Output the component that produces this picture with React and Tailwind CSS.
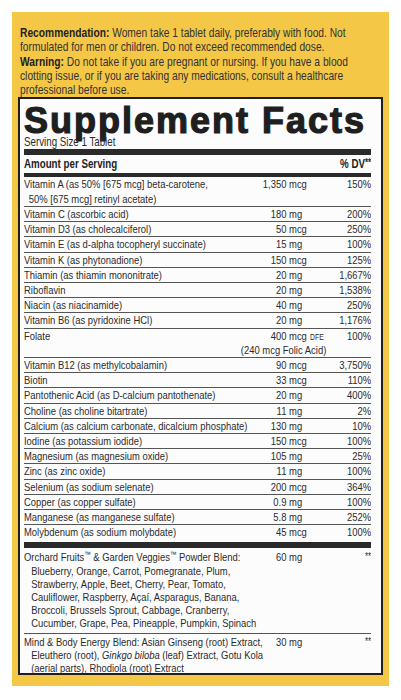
const rows = [
  { name: ["Vitamin A (as 50% [675 mcg] beta-carotene,", "50% [675 mcg] retinyl acetate)"], n: "1,350", u: "mcg", dv: "150%" },
  { name: ["Vitamin C (ascorbic acid)"], n: "180", u: "mg", dv: "200%" },
  { name: ["Vitamin D3 (as cholecalciferol)"], n: "50", u: "mcg", dv: "250%" },
  { name: ["Vitamin E (as d-alpha tocopheryl succinate)"], n: "15", u: "mg", dv: "100%" },
  { name: ["Vitamin K (as phytonadione)"], n: "150", u: "mcg", dv: "125%" },
  { name: ["Thiamin (as thiamin mononitrate)"], n: "20", u: "mg", dv: "1,667%" },
  { name: ["Riboflavin"], n: "20", u: "mg", dv: "1,538%" },
  { name: ["Niacin (as niacinamide)"], n: "40", u: "mg", dv: "250%" },
  { name: ["Vitamin B6 (as pyridoxine HCl)"], n: "20", u: "mg", dv: "1,176%" },
  { name: ["Folate"], n: "400", u: "mcg", dfe: true, dv: "100%" },
  { name: ["Vitamin B12 (as methylcobalamin)"], n: "90", u: "mcg", dv: "3,750%" },
  { name: ["Biotin"], n: "33", u: "mcg", dv: "110%" },
  { name: ["Pantothenic Acid (as D-calcium pantothenate)"], n: "20", u: "mg", dv: "400%" },
  { name: ["Choline (as choline bitartrate)"], n: "11", u: "mg", dv: "2%" },
  { name: ["Calcium (as calcium carbonate, dicalcium phosphate)"], n: "130", u: "mg", dv: "10%" },
  { name: ["Iodine (as potassium iodide)"], n: "150", u: "mcg", dv: "100%" },
  { name: ["Magnesium (as magnesium oxide)"], n: "105", u: "mg", dv: "25%" },
  { name: ["Zinc (as zinc oxide)"], n: "11", u: "mg", dv: "100%" },
  { name: ["Selenium (as sodium selenate)"], n: "200", u: "mcg", dv: "364%" },
  { name: ["Copper (as copper sulfate)"], n: "0.9", u: "mg", dv: "100%" },
  { name: ["Manganese (as manganese sulfate)"], n: "5.8", u: "mg", dv: "252%" },
  { name: ["Molybdenum (as sodium molybdate)"], n: "45", u: "mcg", dv: "100%" },
];

// the label is set in a condensed face; there is none installed, so the text
// blocks are laid out wide and squeezed to 80% horizontally.
function Amount({ n, u, dfe }) {
  return (
    <div className="w-[85px] shrink-0">
      <div className="whitespace-nowrap">
        <span className="inline-block w-[31px] text-right">{n}</span>{" "}
        {u}
        {dfe && <span className="text-[8.5px] leading-none ml-[4px]">DFE</span>}
      </div>
      {dfe && <div className="-ml-[26px] whitespace-nowrap">(240 mcg Folic Acid)</div>}
    </div>
  );
}

function Row({ r, last }) {
  return (
    <div className={"flex leading-[14.2px] " + (last ? "" : "border-b border-[#555]")}>
      <div className="w-[297px] shrink-0 whitespace-nowrap">
        {r.name.map((l, i) => (
          <div key={i} className={i > 0 ? "pl-[6px]" : ""}>{l}</div>
        ))}
      </div>
      <Amount n={r.n} u={r.u} dfe={r.dfe} />
      <div className="flex-1 text-right">{r.dv}</div>
    </div>
  );
}

const TM = () => <span className="text-[8px] leading-none align-[4px]">™</span>;

export default function App() {
  return (
    <div className="w-[401px] h-[700px] bg-white pt-3 pl-3 font-['Liberation_Sans',Arial,sans-serif]">
      <div className="w-[377px] h-[674px] bg-[#f4c746] pt-[14px] px-[6px] text-[#2a2a2a]">
        <div className="w-[360px] pl-[2px] overflow-hidden">
          <p className="w-[440px] origin-top-left scale-x-[0.8] text-[12.8px] leading-[14.3px] text-[#333] whitespace-nowrap">
            <b className="font-bold text-[#222]">Recommendation:</b> Women take 1 tablet daily, preferably with food. Not<br />
            formulated for men or children. Do not exceed recommended dose.<br />
            <b className="font-bold text-[#222]">Warning:</b> Do not take if you are pregnant or nursing. If you have a blood<br />
            clotting issue, or if you are taking any medications, consult a healthcare<br />
            professional before use.
          </p>
        </div>

        <div className="h-[578px] border-2 border-[#1e1e1e] bg-[#fcfcfd] px-[4px] text-[#2b2b2b]">
          <h1 className="mt-[6px] leading-[31px] text-[36px] font-bold tracking-[2px] text-[#1f1f1f] [-webkit-text-stroke:1.2px_#1f1f1f] whitespace-nowrap">
            Supplement Facts
          </h1>

          <div className="w-[347px] overflow-hidden">
            <div className="w-[434px] origin-top-left scale-x-[0.8] text-[11.8px]">
              <div className="leading-[13px] text-[12.2px]">Serving Size 1 Tablet</div>
              <div className="h-[6px] bg-[#2a2a2a]" />
              <div className="flex justify-between leading-[18px] font-bold text-[12.2px] text-[#222]">
                <span>Amount per Serving</span>
                <span>% DV<span className="text-[10px] leading-none align-[2px]">**</span></span>
              </div>
              <div className="h-[4px] bg-[#2a2a2a]" />

              {rows.map((r, i) => (
                <Row key={i} r={r} last={i === rows.length - 1} />
              ))}

              <div className="mt-[3px] h-[6px] bg-[#2a2a2a]" />

              <div className="flex leading-[13.2px] pt-[3px] pb-[2px] border-b border-[#555]">
                <div className="w-[297px] shrink-0 whitespace-nowrap">
                  <div>Orchard Fruits<TM /> &amp; Garden Veggies<TM /> Powder Blend:</div>
                  <div className="pl-[9px]">
                    <div>Blueberry, Orange, Carrot, Pomegranate, Plum,</div>
                    <div>Strawberry, Apple, Beet, Cherry, Pear, Tomato,</div>
                    <div>Cauliflower, Raspberry, Açaí, Asparagus, Banana,</div>
                    <div>Broccoli, Brussels Sprout, Cabbage, Cranberry,</div>
                    <div>Cucumber, Grape, Pea, Pineapple, Pumpkin, Spinach</div>
                  </div>
                </div>
                <Amount n="60" u="mg" />
                <div className="flex-1 text-right text-[10px] leading-[11px]">**</div>
              </div>

              <div className="flex leading-[13.2px] pt-[2px]">
                <div className="w-[297px] shrink-0 whitespace-nowrap">
                  <div>Mind &amp; Body Energy Blend: Asian Ginseng (root) Extract,</div>
                  <div className="pl-[9px]">
                    <div>Eleuthero (root), <i>Ginkgo biloba</i> (leaf) Extract, Gotu Kola</div>
                    <div>(aerial parts), Rhodiola (root) Extract</div>
                  </div>
                </div>
                <Amount n="30" u="mg" />
                <div className="flex-1 text-right text-[10px] leading-[11px]">**</div>
              </div>
            </div>
          </div>
        </div>
      </div>
    </div>
  );
}
